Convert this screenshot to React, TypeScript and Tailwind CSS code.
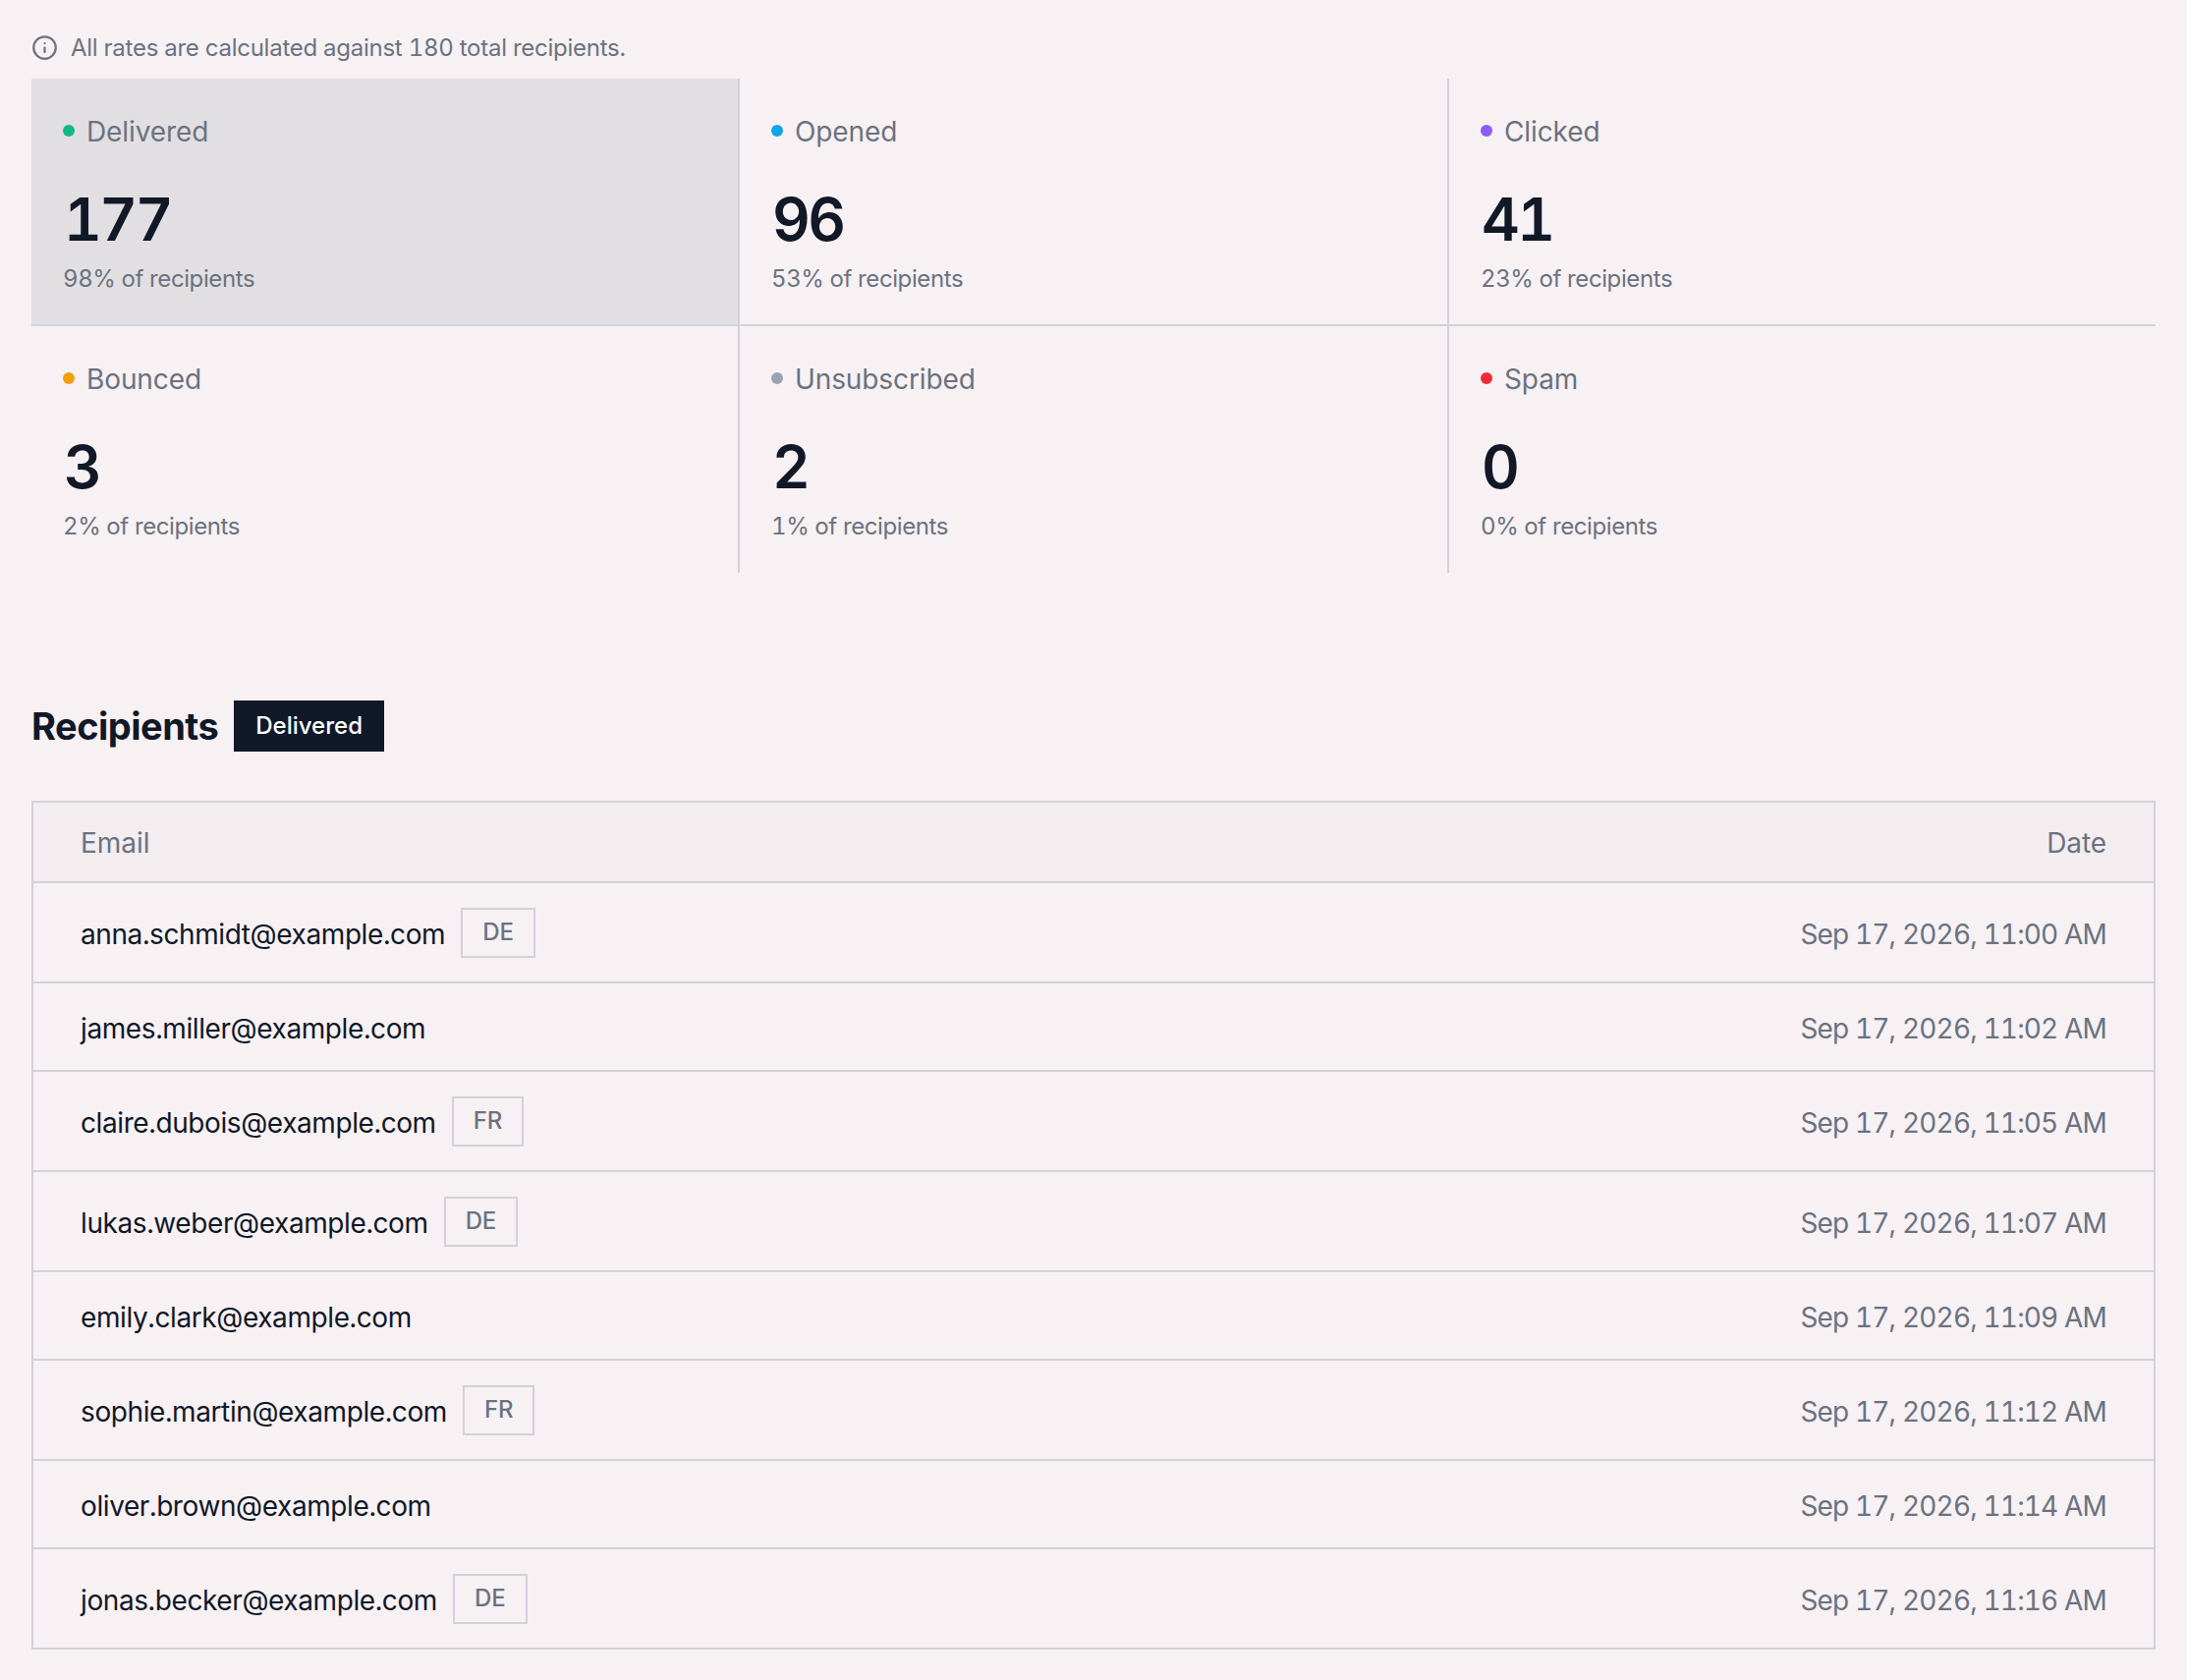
import React from "react";

const stats = [
  { label: "Delivered", dot: "bg-[#10b981]", value: "177", sub: "98% of recipients", active: true },
  { label: "Opened", dot: "bg-[#0ea5e9]", value: "96", sub: "53% of recipients" },
  { label: "Clicked", dot: "bg-[#8b5cf6]", value: "41", sub: "23% of recipients" },
  { label: "Bounced", dot: "bg-[#f59e0b]", value: "3", sub: "2% of recipients" },
  { label: "Unsubscribed", dot: "bg-[#9ca3af]", value: "2", sub: "1% of recipients" },
  { label: "Spam", dot: "bg-[#ef2b3a]", value: "0", sub: "0% of recipients" },
];

const rows: { email: string; tag?: string; date: string; last?: boolean }[] = [
  { email: "anna.schmidt@example.com", tag: "DE", date: "Sep 17, 2026, 11:00 AM" },
  { email: "james.miller@example.com", date: "Sep 17, 2026, 11:02 AM" },
  { email: "claire.dubois@example.com", tag: "FR", date: "Sep 17, 2026, 11:05 AM" },
  { email: "lukas.weber@example.com", tag: "DE", date: "Sep 17, 2026, 11:07 AM" },
  { email: "emily.clark@example.com", date: "Sep 17, 2026, 11:09 AM" },
  { email: "sophie.martin@example.com", tag: "FR", date: "Sep 17, 2026, 11:12 AM" },
  { email: "oliver.brown@example.com", date: "Sep 17, 2026, 11:14 AM" },
  { email: "jonas.becker@example.com", tag: "DE", date: "Sep 17, 2026, 11:16 AM", last: true },
];

export default function App() {
  return (
    <div className="min-h-[1710px] bg-[#f7f1f4] px-8 pt-8 font-['Inter',sans-serif] text-[#6b7280] tabular-nums">
      <div className="flex h-[48px] items-start gap-[13px] text-[24px] leading-[32px]">
        <svg className="mt-[3px]" width="27" height="27" viewBox="0 0 24 24" fill="none" stroke="currentColor" strokeWidth="2" strokeLinecap="round" strokeLinejoin="round">
          <circle cx="12" cy="12" r="10" />
          <path d="M12 16v-4" />
          <path d="M12 8h.01" />
        </svg>
        <span className="pt-[1px] tracking-[-0.26px]">All rates are calculated against 180 total recipients.</span>
      </div>
      <div className="grid grid-cols-[721px_722px_1fr]">
        {stats.map((s, i) => (
          <div
            key={s.label}
            className={`flex flex-col px-8 pt-[36px] border-[#d1d1d9] ${i % 3 !== 2 ? "border-r-2" : ""} ${i < 3 ? "h-[252px] border-b-2" : "h-[251px]"} ${s.active ? "bg-[#e2dfe2]" : ""}`}
          >
            <div className="flex items-center gap-[12px] text-[28px] leading-[36px] tracking-[-0.1px]">
              <span className={`mb-[2px] h-[12px] w-[12px] rounded-full ${s.dot}`} />
              {s.label}
            </div>
            <div className="mt-[35px] pl-[1px] text-[60px] font-semibold leading-[72px] tracking-[-2.5px] text-[#111827]">{s.value}</div>
            <div className="mt-[9px] text-[24px] leading-[32px] tracking-[-0.4px]">{s.sub}</div>
          </div>
        ))}
      </div>
      <div className="mt-[130px] flex items-center gap-[16px]">
        <h2 className="text-[38px] font-bold leading-[52px] tracking-[-0.5px] text-[#111827]">Recipients</h2>
        <span className="flex h-[52px] items-center bg-[#111827] px-[22px] text-[24px] font-medium text-white">Delivered</span>
      </div>
      <div className="mt-[50px] border-2 border-[#d1d1d9]">
        <div className="flex h-[82px] items-center justify-between border-b-2 border-[#d1d1d9] bg-[#f3edf0] px-[48px] text-[28px]">
          <span className="pt-[2px]">Email</span>
          <span className="pt-[2px] tracking-[-0.1px]">Date</span>
        </div>
        {rows.map((r) => (
          <div
            key={r.email}
            className={`flex items-center justify-between px-[48px] text-[28px] ${r.last ? "h-[100px]" : "border-b-2 border-[#d1d1d9]"} ${r.last ? "" : r.tag ? "h-[102px]" : "h-[90px]"}`}
          >
            <div className="flex items-center gap-[16px] text-[#111827]">
              <span className="pt-[4px] tracking-[-0.4px]">{r.email}</span>
              {r.tag && (
                <span className="flex h-[51px] items-center border-2 border-[#d1d1d9] px-[20px] text-[24px] font-medium tracking-[-0.1px] text-[#6b7280]">{r.tag}</span>
              )}
            </div>
            <span className="pt-[4px] tracking-[-0.85px]">{r.date}</span>
          </div>
        ))}
      </div>
    </div>
  );
}
